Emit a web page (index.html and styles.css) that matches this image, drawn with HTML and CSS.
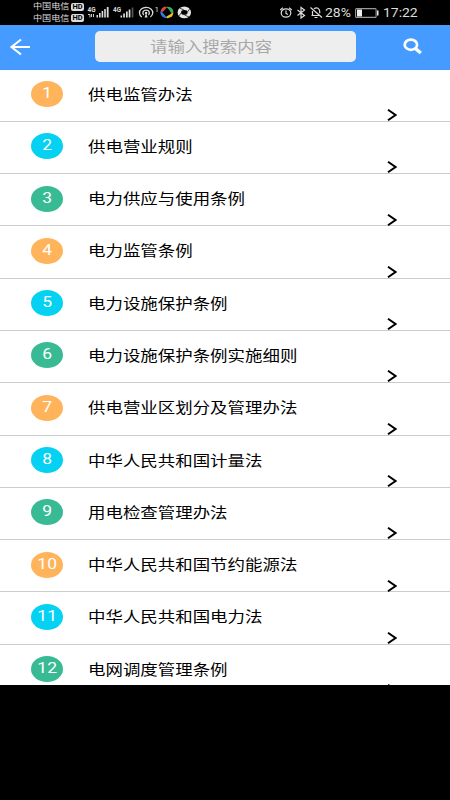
FILE: index.html
```
<!DOCTYPE html>
<html lang="zh-CN">
<head>
<meta charset="utf-8">
<title>法规列表</title>
<link rel="stylesheet" href="styles.css">
</head>
<body>
<div class="status">
  <div class="carriers">
    <div class="carrier"><span class="name">中国电信</span><span class="hd">HD</span></div>
    <div class="carrier"><span class="name">中国电信</span><span class="hd">HD</span></div>
  </div>
  <svg class="signals" width="106" height="25" viewBox="86 0 106 25">
    <g fill="#ddd" font-family="Roboto, sans-serif" font-size="7" font-weight="700">
      <text x="87.5" y="12" textLength="8" lengthAdjust="spacingAndGlyphs">4G</text>
      <text x="113" y="12" textLength="8" lengthAdjust="spacingAndGlyphs">4G</text>
      <text x="154.500" y="12" font-size="8" font-weight="400">1</text>
    </g>
    <path d="M88 14.500h2v3M91.500 14v3M93.500 14v3" fill="none" stroke="#ccc"/>
    <path d="M96.500 15h1.500v2.500h-1.500zM99 13h1.600v4.500H99zM101.600 11h1.600v6.500h-1.600zM104.200 9h1.600v8.500h-1.600zM106.800 7h1.800v10.500h-1.800zM120.500 15.500h1.600v2h-1.600zM123.200 13.500h1.700v4h-1.700zM126 11.500h1.700v6H126zM128.700 9.500h1.700v8h-1.700z" fill="#ddd"/>
    <path d="M131.700 7.500h1.700v10h-1.700z" fill="#555"/>
    <g fill="none" stroke="#ddd" stroke-width="1.300">
      <path d="M141.800 17c-3-2-3-6-.5-8s7-2.200 9.600 0 2.500 6-.5 8"/>
      <path d="M143.700 15c-1.700-2-.8-4.800 2.400-4.800s4.100 2.800 2.400 4.800"/>
    </g>
    <circle cx="146.100" cy="13" r="1.300" fill="#ddd"/><path d="M146.100 13l-1.500 4.500h3z" fill="#ddd"/>
    <path d="M166 6.800q6.500-.8 7.500 5l-1.500 2.700-3-5z" fill="#35ae54"/>
    <path d="M173.500 12.500q-.5 5-6 5.700l-3-.5 6.500-4z" fill="#f2be25"/>
    <path d="M167.500 18.200q-6.500-.2-7.300-6l1.200-1.200 3.200 4z" fill="#287fe0"/>
    <path d="M160.500 11.500q.5-3.500 4-5l2.500.7-4 4.500z" fill="#e34545"/>
    <ellipse cx="167" cy="12.400" rx="2.900" ry="2.500" fill="#000"/>
    <ellipse cx="184.300" cy="12.400" rx="5" ry="4.200" fill="none" stroke="#e5e5e5" stroke-width="3.500"/>
    <path d="M179.500 8l4.500 2M190 8.500l-3 4M189 17l-4.500-2M178.500 16.500l3-4" stroke="#000" stroke-width=".7"/>
  </svg>
  <svg class="sys" width="46" height="25" viewBox="279 0 46 25">
    <g fill="none" stroke="#ddd" stroke-width="1.200">
      <ellipse cx="286" cy="13" rx="4.800" ry="4.200"/>
      <path d="M286 10.500v3l2 1M280.200 10l2.700-2.200M291.800 10l-2.700-2.200"/>
      <path d="M297.500 10l7 5.500-3.500 2.500V7.500l3.500 2.500-7 5.500"/>
      <path d="M310.500 7.500l11.500 10M311.500 15.500h8M312.500 15v-4M314 8.800c3-2 5.500-.3 5.700 2.500v2M314.500 17.500h3"/>
    </g>
  </svg>
  <span class="percent">28%</span>
  <svg class="battery" width="25" height="25" viewBox="354 0 25 25">
    <rect x="355.600" y="8.600" width="20.500" height="8.800" rx="1" fill="none" stroke="#999" stroke-width="1.100"/>
    <path d="M357 9.500h5v7h-5zM377 10.500h1.500v5H377z" fill="#eee"/>
  </svg>
  <span class="clock">17:22</span>
</div>
<header class="bar">
  <svg class="back" width="22" height="18" viewBox="0 0 22 18"><path d="M21 9H2.500M12 1.500L2.500 9l9.500 7.500" fill="none" stroke="#fff" stroke-width="2.100"/></svg>
  <div class="search"><span class="wide">请输入搜索内容</span></div>
  <svg class="find" width="20" height="17" viewBox="0 0 20 17"><ellipse cx="7.900" cy="6.700" rx="6.200" ry="5.100" fill="none" stroke="#fff" stroke-width="2.700"/><path d="M12.300 10.500l5.500 4.500" stroke="#fff" stroke-width="3.500"/></svg>
</header>
<main class="list" id="list"></main>
<script src="list.js"></script>
</body>
</html>
```
FILE: styles.css
```
* { box-sizing: border-box; }
body {
  margin: 0;
  width: 450px;
  height: 800px;
  overflow: hidden;
  background: #000;
  font-family: Roboto, "Noto Sans CJK SC", sans-serif;
}
.status {
  display: flex;
  height: 25px;
  color: #ddd;
}
.carriers {
  width: 53px;
  margin-left: 33px;
  padding-top: 1px;
}
.carrier {
  display: flex;
  align-items: center;
  height: 11.5px;
  white-space: nowrap;
}
.name {
  width: 38px;
  font-size: 8px;
  line-height: 11px;
  transform: scaleX(1.14);
  transform-origin: left;
}
.hd {
  width: 13px;
  height: 8px;
  border-radius: 2px;
  background: #ddd;
  color: #000;
  font-size: 7.500px;
  font-weight: 700;
  line-height: 8.500px;
  text-align: center;
}
.sys { margin-left: 87px; }
.percent, .clock {
  font-size: 12px;
  line-height: 26px;
  white-space: nowrap;
  transform: scaleX(1.16);
  transform-origin: left;
}
.percent { width: 29px; }
.clock { margin-left: 4px; }
.bar {
  display: flex;
  align-items: center;
  height: 44.500px;
  background: #459bff;
}
.back { margin: 0 0 1px 9px; }
.search {
  width: 261px;
  height: 31px;
  margin: 0 0 1px 63.500px;
  padding-left: 55px;
  border-radius: 5px;
  background: #eee;
  color: #a8a8a8;
  line-height: 31px;
}
.find { margin: 0 0 2px 47.500px; }
.wide {
  display: inline-block;
  font-size: 14.500px;
  white-space: nowrap;
  transform: scaleX(1.203);
  transform-origin: left;
}
.list {
  height: 615.500px;
  overflow: hidden;
  background: #fff;
}
.row {
  display: flex;
  height: 52.300px;
  border-bottom: 1px solid #ccc;
}
.num {
  width: 32px;
  height: 26px;
  margin: 11.500px 25px 0 30.700px;
  border-radius: 50%;
  color: #fff;
  line-height: 24px;
  text-align: center;
}
.num .wide { transform-origin: center; }
.orange { background: #ffb35a; }
.cyan { background: #05d1f2; }
.green { background: #38bb94; }
.title {
  width: 299px;
  color: #000;
  line-height: 50.500px;
}
.arrow {
  flex: none;
  margin-top: 39.500px;
}
```
FILE: list.js
```
const titles = [
  "供电监管办法", "供电营业规则", "电力供应与使用条例", "电力监管条例",
  "电力设施保护条例", "电力设施保护条例实施细则", "供电营业区划分及管理办法",
  "中华人民共和国计量法", "用电检查管理办法", "中华人民共和国节约能源法",
  "中华人民共和国电力法", "电网调度管理条例"
];
const colors = ["orange", "cyan", "green"];
document.getElementById("list").innerHTML = titles.map((title, i) => `
  <div class="row">
    <div class="num ${colors[i % 3]}"><span class="wide">${i + 1}</span></div>
    <div class="title"><span class="wide">${title}</span></div>
    <svg class="arrow" width="10" height="12" viewBox="0 0 10 12"><path d="M1 .8L8.500 6 1 11.200" fill="none" stroke="#000" stroke-width="2"/></svg>
  </div>`).join("");
```
